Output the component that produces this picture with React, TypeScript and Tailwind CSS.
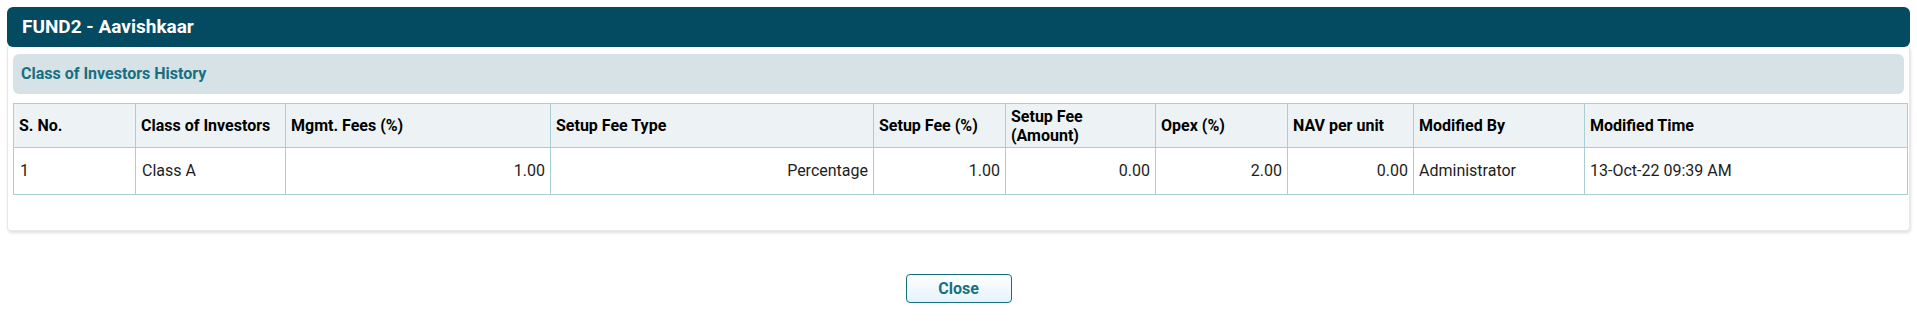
const columns = [
  { label: 'S. No.', width: 'w-[122px]' },
  { label: 'Class of Investors', width: 'w-[150px]' },
  { label: 'Mgmt. Fees (%)', width: 'w-[265px]' },
  { label: 'Setup Fee Type', width: 'w-[323px]' },
  { label: 'Setup Fee (%)', width: 'w-[132px]' },
  { label: 'Setup Fee (Amount)', width: 'w-[150px]' },
  { label: 'Opex (%)', width: 'w-[132px]' },
  { label: 'NAV per unit', width: 'w-[126px]' },
  { label: 'Modified By', width: 'w-[171px]' },
  { label: 'Modified Time', width: 'w-[323px]' },
];

const rows = [
  {
    sno: '1',
    investorClass: 'Class A',
    mgmtFees: '1.00',
    setupFeeType: 'Percentage',
    setupFee: '1.00',
    setupFeeAmount: '0.00',
    opex: '2.00',
    nav: '0.00',
    modifiedBy: 'Administrator',
    modifiedTime: '13-Oct-22 09:39 AM',
  },
];

const App = () => {
  return (
    <div className="p-[7px] font-['Roboto',sans-serif] text-[#1d1d1d]">
      <div className="flex h-[40px] items-center rounded-[6px] bg-[#044a60] pl-[15px]">
        <h1 className="text-[19px] font-bold text-white">FUND2 - Aavishkaar</h1>
      </div>

      <div className="rounded-b-[4px] border-x border-b border-[#e6e9eb] bg-white px-[5px] pt-[7px] pb-[35px] shadow-[1px_2px_3px_rgba(0,0,0,0.12)]">
        <div className="flex h-[40px] items-center rounded-[6px] bg-[#d7e2e7] pl-[8px]">
          <h2 className="text-[16px] font-bold text-[#17707f]">
            Class of Investors History
          </h2>
        </div>

        <table className="mt-[9px] w-full table-fixed border-collapse text-[16px]">
          <colgroup>
            {columns.map((col) => (
              <col key={col.label} className={col.width} />
            ))}
          </colgroup>
          <thead>
            <tr className="bg-[#edf3f5]">
              {columns.map((col) => (
                <th
                  key={col.label}
                  className="h-[44px] border border-[#a9ced3] px-[5px] text-left align-middle leading-[19px] font-bold text-black"
                >
                  {col.label}
                </th>
              ))}
            </tr>
          </thead>
          <tbody>
            {rows.map((row) => (
              <tr key={row.sno}>
                <td className="h-[47px] border border-[#a9ced3] px-[6px]">{row.sno}</td>
                <td className="border border-[#a9ced3] px-[6px]">{row.investorClass}</td>
                <td className="border border-[#a9ced3] px-[5px] text-right">{row.mgmtFees}</td>
                <td className="border border-[#a9ced3] px-[5px] text-right">{row.setupFeeType}</td>
                <td className="border border-[#a9ced3] px-[5px] text-right">{row.setupFee}</td>
                <td className="border border-[#a9ced3] px-[5px] text-right">{row.setupFeeAmount}</td>
                <td className="border border-[#a9ced3] px-[5px] text-right">{row.opex}</td>
                <td className="border border-[#a9ced3] px-[5px] text-right">{row.nav}</td>
                <td className="border border-[#a9ced3] px-[5px]">{row.modifiedBy}</td>
                <td className="border border-[#a9ced3] px-[5px]">{row.modifiedTime}</td>
              </tr>
            ))}
          </tbody>
        </table>
      </div>

      <div className="mt-[43px] flex justify-center">
        <button className="h-[29px] w-[106px] rounded-[4px] border border-[#16707c] bg-gradient-to-b from-white to-[#e5f2fb] text-[16px] font-bold text-[#17707f]">
          Close
        </button>
      </div>
    </div>
  );
};

export default App;
